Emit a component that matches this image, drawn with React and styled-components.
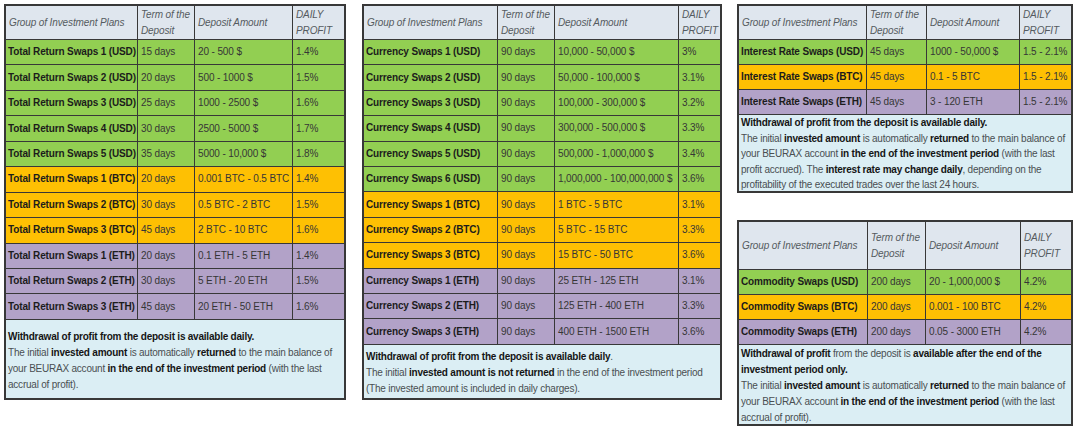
import React from "react";
import styled, { createGlobalStyle } from "styled-components";

const Global = createGlobalStyle`
  html, body { margin: 0; padding: 0; background: #ffffff; }
  body { font-family: "Liberation Sans", Arial, sans-serif; }
`;

const COLORS = {
  usd: "#92cf52",
  btc: "#fec003",
  eth: "#b2a2c8",
  head: "#dfe6ee",
  note: "#dbeef4",
  line: "#383838",
};

const Page = styled.div`
  display: flex;
  align-items: flex-start;
  padding: 4px 0 0 4px;
  width: 1080px;
  height: 429px;
  box-sizing: border-box;
  overflow: hidden;
`;

const Column = styled.div`
  display: flex;
  flex-direction: column;
  gap: 27px;
  margin-left: ${(p) => p.$ml}px;
`;

const Table = styled.table`
  border-collapse: separate;
  border-spacing: 0;
  table-layout: fixed;
  width: ${(p) => p.$w}px;
  border: 2px solid ${COLORS.line};
  font-size: 10px;
  letter-spacing: -0.12px;
  color: #363636;
`;

const HeadRow = styled.tr`
  height: ${(p) => p.$h}px;
  background: ${COLORS.head};
`;

const HeadCell = styled.th`
  border-right: 1px solid ${COLORS.line};
  border-bottom: 1px solid ${COLORS.line};
  &:last-child { border-right: none; }
  font-weight: normal;
  font-style: italic;
  color: #555b60;
  text-align: left;
  vertical-align: middle;
  padding: 1px 2px 0 3px;
  line-height: 16px;
  white-space: nowrap;
  overflow: hidden;
`;

const Row = styled.tr`
  background: ${(p) => COLORS[p.$kind]};
  height: ${(p) => p.$h}px;
`;

const Cell = styled.td`
  border-right: 1px solid ${COLORS.line};
  border-bottom: 1px solid ${COLORS.line};
  &:last-child { border-right: none; }
  padding: 0 2px 0 3px;
  white-space: nowrap;
  overflow: hidden;
  vertical-align: middle;
  line-height: 14px;
`;

const NameCell = styled(Cell)`
  font-weight: bold;
  color: #1c1c1c;
  padding-left: 2px;
  letter-spacing: -0.14px;
`;

const NoteRow = styled.tr`
  height: ${(p) => p.$h}px;
`;

const NoteCell = styled.td`
  background: ${COLORS.note};
  vertical-align: top;
  padding: 0 2px 0 2px;
  color: #4a4f52;
  white-space: nowrap;
`;

const NoteBody = styled.div`
  height: ${(p) => p.$h}px;
  box-sizing: border-box;
  padding-top: ${(p) => p.$pt}px;
  line-height: ${(p) => p.$lh || 16}px;
  letter-spacing: -0.22px;
  overflow: visible;
`;

const Line = styled.div`
  display: block;
`;

const B = styled.b`
  font-weight: bold;
  color: #151515;
`;

function PlanTable({ w, cols, headH, rowH, rows, note, noteH, notePt, noteLh }) {
  return (
    <Table $w={w}>
      <colgroup>
        {cols.map((c, i) => (
          <col key={i} style={{ width: c }} />
        ))}
      </colgroup>
      <thead>
        <HeadRow $h={headH}>
          <HeadCell>Group of Investment Plans</HeadCell>
          <HeadCell>
            Term of the
            <br />
            Deposit
          </HeadCell>
          <HeadCell>Deposit Amount</HeadCell>
          <HeadCell>
            DAILY
            <br />
            PROFIT
          </HeadCell>
        </HeadRow>
      </thead>
      <tbody>
        {rows.map((r, i) => (
          <Row key={i} $kind={r[0]} $h={rowH}>
            <NameCell>{r[1]}</NameCell>
            <Cell>{r[2]}</Cell>
            <Cell>{r[3]}</Cell>
            <Cell>{r[4]}</Cell>
          </Row>
        ))}
        <NoteRow $h={noteH}>
          <NoteCell colSpan={4}>
            <NoteBody $h={noteH} $pt={notePt} $lh={noteLh}>
              {note}
            </NoteBody>
          </NoteCell>
        </NoteRow>
      </tbody>
    </Table>
  );
}

const totalRows = [
  ["usd", "Total Return Swaps 1 (USD)", "15 days", "20 - 500 $", "1.4%"],
  ["usd", "Total Return Swaps 2 (USD)", "20 days", "500 - 1000 $", "1.5%"],
  ["usd", "Total Return Swaps 3 (USD)", "25 days", "1000 - 2500 $", "1.6%"],
  ["usd", "Total Return Swaps 4 (USD)", "30 days", "2500 - 5000 $", "1.7%"],
  ["usd", "Total Return Swaps 5 (USD)", "35 days", "5000 - 10,000 $", "1.8%"],
  ["btc", "Total Return Swaps 1 (BTC)", "20 days", "0.001 BTC - 0.5 BTC", "1.4%"],
  ["btc", "Total Return Swaps 2 (BTC)", "30 days", "0.5 BTC - 2 BTC", "1.5%"],
  ["btc", "Total Return Swaps 3 (BTC)", "45 days", "2 BTC - 10 BTC", "1.6%"],
  ["eth", "Total Return Swaps 1 (ETH)", "20 days", "0.1 ETH - 5 ETH", "1.4%"],
  ["eth", "Total Return Swaps 2 (ETH)", "30 days", "5 ETH - 20 ETH", "1.5%"],
  ["eth", "Total Return Swaps 3 (ETH)", "45 days", "20 ETH - 50 ETH", "1.6%"],
];

const currencyRows = [
  ["usd", "Currency Swaps 1 (USD)", "90 days", "10,000 - 50,000 $", "3%"],
  ["usd", "Currency Swaps 2 (USD)", "90 days", "50,000 - 100,000 $", "3.1%"],
  ["usd", "Currency Swaps 3 (USD)", "90 days", "100,000 - 300,000 $", "3.2%"],
  ["usd", "Currency Swaps 4 (USD)", "90 days", "300,000 - 500,000 $", "3.3%"],
  ["usd", "Currency Swaps 5 (USD)", "90 days", "500,000 - 1,000,000 $", "3.4%"],
  ["usd", "Currency Swaps 6 (USD)", "90 days", "1,000,000 - 100,000,000 $", "3.6%"],
  ["btc", "Currency Swaps 1 (BTC)", "90 days", "1 BTC - 5 BTC", "3.1%"],
  ["btc", "Currency Swaps 2 (BTC)", "90 days", "5 BTC - 15 BTC", "3.3%"],
  ["btc", "Currency Swaps 3 (BTC)", "90 days", "15 BTC - 50 BTC", "3.6%"],
  ["eth", "Currency Swaps 1 (ETH)", "90 days", "25 ETH - 125 ETH", "3.1%"],
  ["eth", "Currency Swaps 2 (ETH)", "90 days", "125 ETH - 400 ETH", "3.3%"],
  ["eth", "Currency Swaps 3 (ETH)", "90 days", "400 ETH - 1500 ETH", "3.6%"],
];

const interestRows = [
  ["usd", "Interest Rate Swaps (USD)", "45 days", "1000 - 50,000 $", "1.5 - 2.1%"],
  ["btc", "Interest Rate Swaps (BTC)", "45 days", "0.1 - 5 BTC", "1.5 - 2.1%"],
  ["eth", "Interest Rate Swaps (ETH)", "45 days", "3 - 120 ETH", "1.5 - 2.1%"],
];

const commodityRows = [
  ["usd", "Commodity Swaps (USD)", "200 days", "20 - 1,000,000 $", "4.2%"],
  ["btc", "Commodity Swaps (BTC)", "200 days", "0.001 - 100 BTC", "4.2%"],
  ["eth", "Commodity Swaps (ETH)", "200 days", "0.05 - 3000 ETH", "4.2%"],
];

const totalNote = (
  <>
    <Line>
      <B>Withdrawal of profit from the deposit is available daily.</B>
    </Line>
    <Line>
      The initial <B>invested amount</B> is automatically <B>returned</B> to the main balance of
    </Line>
    <Line>
      your BEURAX account <B>in the end of the investment period</B> (with the last
    </Line>
    <Line>accrual of profit).</Line>
  </>
);

const currencyNote = (
  <>
    <Line>
      <B>Withdrawal of profit from the deposit is available daily</B>.
    </Line>
    <Line>
      The initial <B>invested amount is not returned</B> in the end of the investment period
    </Line>
    <Line>(The invested amount is included in daily charges).</Line>
  </>
);

const interestNote = (
  <>
    <Line>
      <B>Withdrawal of profit from the deposit is available daily.</B>
    </Line>
    <Line>
      The initial <B>invested amount</B> is automatically <B>returned</B> to the main balance of
    </Line>
    <Line>
      your BEURAX account <B>in the end of the investment period</B> (with the last
    </Line>
    <Line>
      profit accrued). The <B>interest rate may change daily</B>, depending on the
    </Line>
    <Line>profitability of the executed trades over the last 24 hours.</Line>
  </>
);

const commodityNote = (
  <>
    <Line>
      <B>Withdrawal of profit</B> from the deposit is <B>available after the end of the</B>
    </Line>
    <Line>
      <B>investment period only.</B>
    </Line>
    <Line>
      The initial <B>invested amount</B> is automatically <B>returned</B> to the main balance of
    </Line>
    <Line>
      your BEURAX account <B>in the end of the investment period</B> (with the last
    </Line>
    <Line>accrual of profit).</Line>
  </>
);

export default function App() {
  return (
    <>
      <Global />
      <Page>
        <PlanTable
          w={342}
          cols={[132, 57, 98, 51]}
          headH={31}
          rowH={25.45}
          rows={totalRows}
          note={totalNote}
          noteH={78}
          notePt={9}
        />
        <Column $ml={16}>
          <PlanTable
            w={360}
            cols={[134, 57, 124, 41]}
            headH={31}
            rowH={25.417}
            rows={currencyRows}
            note={currencyNote}
            noteH={53}
            notePt={4}
          />
        </Column>
        <Column $ml={15}>
          <PlanTable
            w={336}
            cols={[128, 60, 93, 51]}
            headH={31}
            rowH={25}
            rows={interestRows}
            note={interestNote}
            noteH={76}
            notePt={0}
            noteLh={15.6}
          />
          <PlanTable
            w={336}
            cols={[129, 58, 95, 50]}
            headH={48}
            rowH={25}
            rows={commodityRows}
            note={commodityNote}
            noteH={79}
            notePt={1}
          />
        </Column>
      </Page>
    </>
  );
}
